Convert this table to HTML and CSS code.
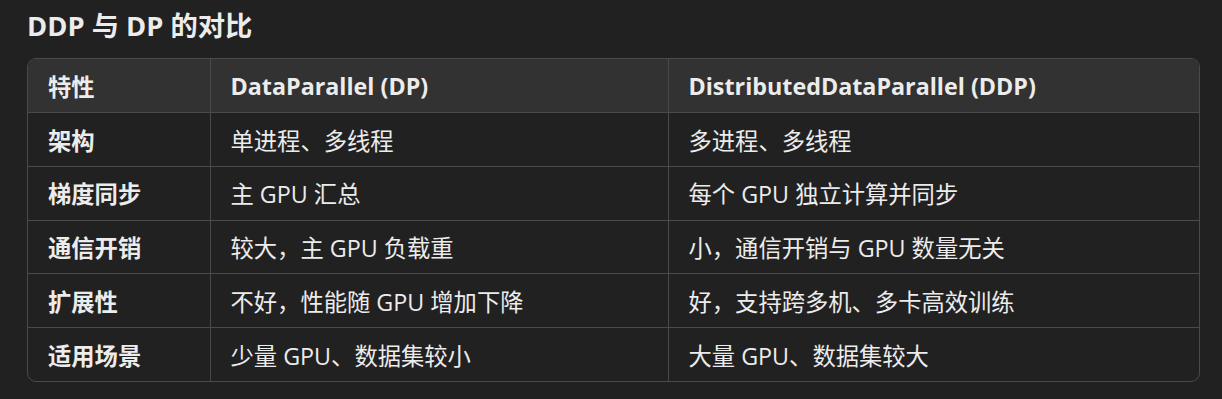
FILE: index.html
```html
<!DOCTYPE html>
<html lang="zh">
<head>
<meta charset="utf-8">
<link rel="stylesheet" href="styles.css">
</head>
<body>
<div class="page">
  <h3 class="title">DDP 与 DP 的对比</h3>
  <div class="table-wrap">
    <table class="cmp">
      <colgroup>
        <col class="c1"><col class="c2"><col class="c3">
      </colgroup>
      <thead>
        <tr><th>特性</th><th>DataParallel (DP)</th><th>DistributedDataParallel (DDP)</th></tr>
      </thead>
      <tbody>
        <tr><td class="key">架构</td><td>单进程、多线程</td><td>多进程、多线程</td></tr>
        <tr><td class="key">梯度同步</td><td>主 GPU 汇总</td><td>每个 GPU 独立计算并同步</td></tr>
        <tr><td class="key">通信开销</td><td>较大，主 GPU 负载重</td><td>小，通信开销与 GPU 数量无关</td></tr>
        <tr><td class="key">扩展性</td><td>不好，性能随 GPU 增加下降</td><td>好，支持跨多机、多卡高效训练</td></tr>
        <tr><td class="key">适用场景</td><td>少量 GPU、数据集较小</td><td>大量 GPU、数据集较大</td></tr>
      </tbody>
    </table>
  </div>
</div>
</body>
</html>
```
FILE: styles.css
```css
html, body {
  margin: 0;
  padding: 0;
  background: #212121;
}
body {
  color: #ececec;
  font-family: "Open Sans", "Noto Sans CJK SC", sans-serif;
}
.page {
  padding: 5px 22px 0 27px;
}
.title {
  margin: 0 0 12px 0;
  font-size: 27.3px;
  font-weight: 700;
  line-height: 41px;
}
.table-wrap {
  border: 1px solid #4a4a4a;
  border-radius: 9px;
  overflow: hidden;
}
.cmp {
  width: 100%;
  border-collapse: collapse;
  table-layout: fixed;
  font-size: 23.3px;
}
.c1 { width: 182px; }
.c2 { width: 458px; }
.cmp th, .cmp td {
  height: 53.7px;
  padding: 0 20px;
  text-align: left;
  vertical-align: middle;
  border-left: 1px solid #4a4a4a;
  border-bottom: 1px solid #4a4a4a;
  box-sizing: border-box;
  white-space: nowrap;
}
.cmp th:first-child, .cmp td:first-child { border-left: none; }
.cmp tbody tr:last-child td { border-bottom: none; }
.cmp thead tr { background: #323232; }
.cmp th { font-weight: 700; }
.cmp td.key { font-weight: 700; }
```
